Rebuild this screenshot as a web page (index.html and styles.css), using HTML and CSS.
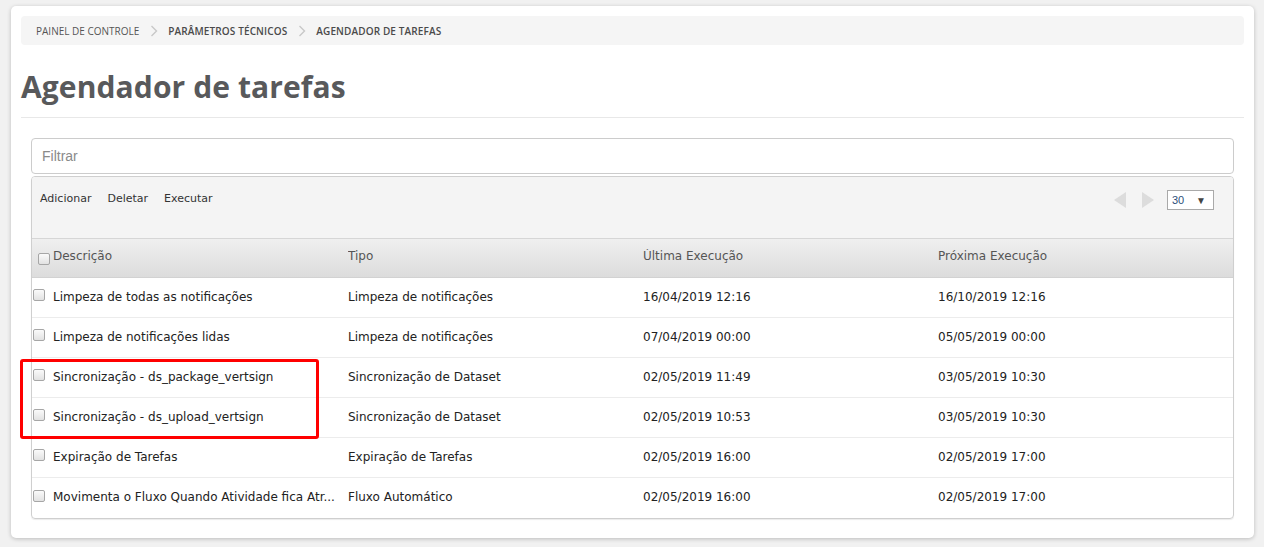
FILE: index.html
```html
<!DOCTYPE html>
<html lang="pt">
<head>
<meta charset="utf-8">
<title>Agendador de tarefas</title>
<link rel="stylesheet" href="styles.css">
</head>
<body>
<div class="card">
  <nav class="crumbs">
    <span class="crumb">PAINEL DE CONTROLE</span>
    <span class="sep"><svg width="8" height="12" viewBox="0 0 8 12"><path d="M1.5 1l5 5-5 5" fill="none" stroke="#c8c8c8" stroke-width="1.4"/></svg></span>
    <span class="crumb strong">PARÂMETROS TÉCNICOS</span>
    <span class="sep"><svg width="8" height="12" viewBox="0 0 8 12"><path d="M1.5 1l5 5-5 5" fill="none" stroke="#c8c8c8" stroke-width="1.4"/></svg></span>
    <span class="crumb strong">AGENDADOR DE TAREFAS</span>
  </nav>
  <h1 class="title">Agendador de tarefas</h1>
  <div class="content">
    <div class="filter"><span class="placeholder">Filtrar</span></div>
    <div class="grid">
      <div class="toolbar">
        <div class="actions">
          <span class="act">Adicionar</span>
          <span class="act">Deletar</span>
          <span class="act">Executar</span>
        </div>
        <div class="pager">
          <svg class="arrow" width="13" height="16" viewBox="0 0 13 16"><path d="M12 0L0 8l12 8z" fill="#dcdcdc"/></svg>
          <svg class="arrow" width="13" height="16" viewBox="0 0 13 16"><path d="M1 0l12 8-12 8z" fill="#dcdcdc"/></svg>
          <div class="select"><span class="num">30</span><span class="tri">▼</span></div>
        </div>
      </div>
      <div class="row head">
        <span class="cb-cell"><span class="cb hcb"></span></span>
        <span class="cell">Descrição</span><span class="cell">Tipo</span><span class="cell">Última Execução</span><span class="cell">Próxima Execução</span>
      </div>
      <div class="row">
        <span class="cb-cell"><span class="cb"></span></span>
        <span class="cell">Limpeza de todas as notificações</span><span class="cell">Limpeza de notificações</span><span class="cell">16/04/2019 12:16</span><span class="cell">16/10/2019 12:16</span>
      </div>
      <div class="row">
        <span class="cb-cell"><span class="cb"></span></span>
        <span class="cell">Limpeza de notificações lidas</span><span class="cell">Limpeza de notificações</span><span class="cell">07/04/2019 00:00</span><span class="cell">05/05/2019 00:00</span>
      </div>
      <div class="row">
        <span class="cb-cell"><span class="cb"></span></span>
        <span class="cell">Sincronização - ds_package_vertsign</span><span class="cell">Sincronização de Dataset</span><span class="cell">02/05/2019 11:49</span><span class="cell">03/05/2019 10:30</span>
      </div>
      <div class="row">
        <span class="cb-cell"><span class="cb"></span></span>
        <span class="cell">Sincronização - ds_upload_vertsign</span><span class="cell">Sincronização de Dataset</span><span class="cell">02/05/2019 10:53</span><span class="cell">03/05/2019 10:30</span>
      </div>
      <div class="row">
        <span class="cb-cell"><span class="cb"></span></span>
        <span class="cell">Expiração de Tarefas</span><span class="cell">Expiração de Tarefas</span><span class="cell">02/05/2019 16:00</span><span class="cell">02/05/2019 17:00</span>
      </div>
      <div class="row last">
        <span class="cb-cell"><span class="cb"></span></span>
        <span class="cell ellip">Movimenta o Fluxo Quando Atividade fica Atr...</span><span class="cell">Fluxo Automático</span><span class="cell">02/05/2019 16:00</span><span class="cell">02/05/2019 17:00</span>
      </div>
    </div>
    <div class="highlight"></div>
  </div>
</div>
</body>
</html>
```

FILE: styles.css
```css
* { box-sizing: border-box; }
html, body { margin: 0; }
body {
  background: #f1f1f1;
  padding: 6px 10px 9px 11px;
  font-family: "DejaVu Sans", Verdana, sans-serif;
}
.card {
  background: #fff;
  border-radius: 5px;
  box-shadow: 0 1px 4px rgba(0,0,0,0.22);
  height: 532px;
  padding: 10px 10px 0 10px;
}
.crumbs {
  background: #f5f5f5;
  border-radius: 4px;
  height: 29px;
  display: flex;
  align-items: center;
  padding-left: 15px;
  font-family: "Open Sans", sans-serif;
  font-size: 10px;
  color: #555;
}
.crumb { padding-top: 1px; }
.crumb.strong { font-weight: 600; color: #4a4a4a; letter-spacing: 0.12px; }
.sep { display: flex; align-items: center; margin: 0 10px 0 11px; }
.title {
  margin: 0;
  font-family: "Open Sans", sans-serif;
  font-weight: 700;
  font-size: 30px;
  color: #58595b;
  letter-spacing: 0.1px;
  padding-top: 21px;
  height: 73px;
  line-height: 42px;
  border-bottom: 1px solid #e8e8e8;
}
.content {
  position: relative;
  padding: 20px 10px 0 10px;
}
.filter {
  height: 36px;
  border: 1px solid #ccc;
  border-radius: 4px;
  display: flex;
  align-items: center;
  padding-left: 10px;
  font-family: "Liberation Sans", Arial, sans-serif;
  font-size: 14px;
  color: #8a8a8a;
}
.grid {
  margin-top: 2px;
  border: 1px solid #cfcfcf;
  border-radius: 4px;
  overflow: hidden;
  box-shadow: 0 1px 1px rgba(0,0,0,0.08);
}
.toolbar {
  background: #f4f4f4;
  height: 62px;
  display: flex;
  justify-content: space-between;
  align-items: flex-start;
  border-bottom: 1px solid #d6d6d6;
}
.actions {
  display: flex;
  gap: 16px;
  padding: 15px 0 0 8px;
  font-size: 11px;
  color: #333;
}
.pager {
  display: flex;
  align-items: center;
  padding: 13px 19px 0 0;
}
.arrow { margin-right: 14px; }
.pager .arrow + .arrow { margin-right: 13px; }
.select {
  width: 47px;
  height: 20px;
  border: 1px solid #a9a9a9;
  background: #fff;
  display: flex;
  align-items: center;
  justify-content: space-between;
  padding: 0 7px 0 4px;
  font-family: "Liberation Sans", Arial, sans-serif;
  font-size: 11px;
}
.num { color: #2c4f7a; }
.tri { font-size: 10px; color: #444; }
.row {
  display: grid;
  grid-template-columns: 21px repeat(4, 1fr);
  height: 40px;
  align-items: center;
  font-size: 12px;
  color: #222;
  border-bottom: 1px solid #ececec;
}
.cell { white-space: nowrap; overflow: hidden; padding-right: 8px; padding-bottom: 2px; }
.row.last { border-bottom: none; }
.row.head {
  background: linear-gradient(#efefef, #dcdcdc);
  color: #555;
  height: 39px;
  border-bottom: 1px solid #d2d2d2;
}
.row.head .cell { padding-bottom: 4px; }
.cb-cell { display: flex; align-items: center; padding-left: 1px; height: 100%; }
.cb {
  width: 12px;
  height: 12px;
  border: 1px solid #a6a6a6;
  border-radius: 2px;
  background: linear-gradient(#fafafa, #e2e2e2);
  display: block;
  margin-top: -5px;
}
.hcb { margin-left: 5px; margin-top: 1px; }
.highlight {
  position: absolute;
  left: -1px;
  top: 241px;
  width: 299px;
  height: 80px;
  border: 3px solid #f00;
  border-radius: 3px;
}
```
